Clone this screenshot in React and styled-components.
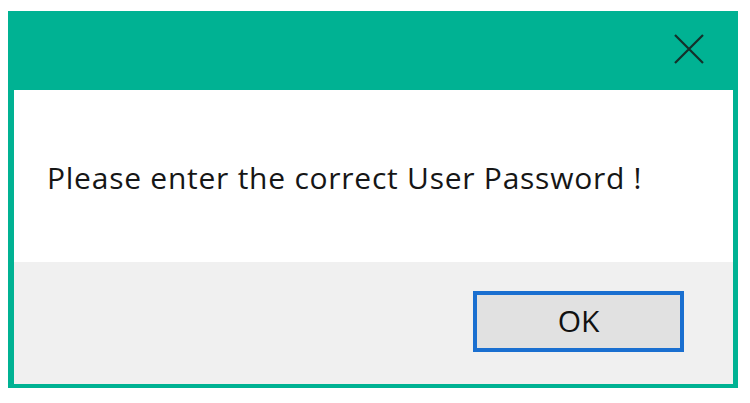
import React from "react";
import styled, { createGlobalStyle } from "styled-components";

const Global = createGlobalStyle`
  html, body { margin: 0; padding: 0; background: #ffffff; }
  body { width: 750px; height: 403px; overflow: hidden; }
`;

const Page = styled.div`
  padding: 11px 12px 0 8px;
  width: 750px;
  box-sizing: border-box;
`;

const Dialog = styled.div`
  width: 730px;
  height: 377px;
  box-sizing: border-box;
  background: #00b293;
  padding: 0 5px 4px 6px;
  display: flex;
  flex-direction: column;
`;

const TitleBar = styled.div`
  height: 79px;
  flex: none;
  display: flex;
  align-items: center;
  justify-content: flex-end;
  padding-right: 28px;
  box-sizing: border-box;
`;

const CloseButton = styled.button`
  border: none;
  background: transparent;
  padding: 0;
  width: 32px;
  height: 30px;
  display: flex;
  align-items: center;
  justify-content: center;
  margin-bottom: 4px;
  cursor: pointer;
`;

const Body = styled.div`
  flex: 1;
  display: flex;
  flex-direction: column;
`;

const MessageArea = styled.div`
  height: 172px;
  background: #ffffff;
  display: flex;
  align-items: center;
  padding: 10px 0 8px 33px;
  box-sizing: border-box;
`;

const Message = styled.p`
  margin: 0;
  font-family: "Open Sans", "Noto Sans", sans-serif;
  font-size: 30px;
  color: #161616;
  letter-spacing: 0.75px;
`;

const Footer = styled.div`
  flex: 1;
  background: #f0f0f0;
  display: flex;
  justify-content: flex-end;
  align-items: flex-start;
  padding: 29px 49px 0 0;
  box-sizing: border-box;
`;

const OkButton = styled.button`
  width: 211px;
  height: 61px;
  box-sizing: border-box;
  background: #e1e1e1;
  border: 4px solid #1a6fd0;
  font-family: "Open Sans", "Noto Sans", sans-serif;
  font-size: 30px;
  line-height: 1;
  color: #111;
  padding: 0 0 2px;
  cursor: pointer;
`;

export default function App() {
  return (
    <>
      <Global />
      <Page>
        <Dialog>
          <TitleBar>
            <CloseButton aria-label="Close">
              <svg width="32" height="30" viewBox="0 0 32 30">
                <path d="M2 1 L30 29 M30 1 L2 29" stroke="#14302a" strokeWidth="2.2" fill="none" />
              </svg>
            </CloseButton>
          </TitleBar>
          <Body>
            <MessageArea>
              <Message>Please enter the correct User Password !</Message>
            </MessageArea>
            <Footer>
              <OkButton>OK</OkButton>
            </Footer>
          </Body>
        </Dialog>
      </Page>
    </>
  );
}
